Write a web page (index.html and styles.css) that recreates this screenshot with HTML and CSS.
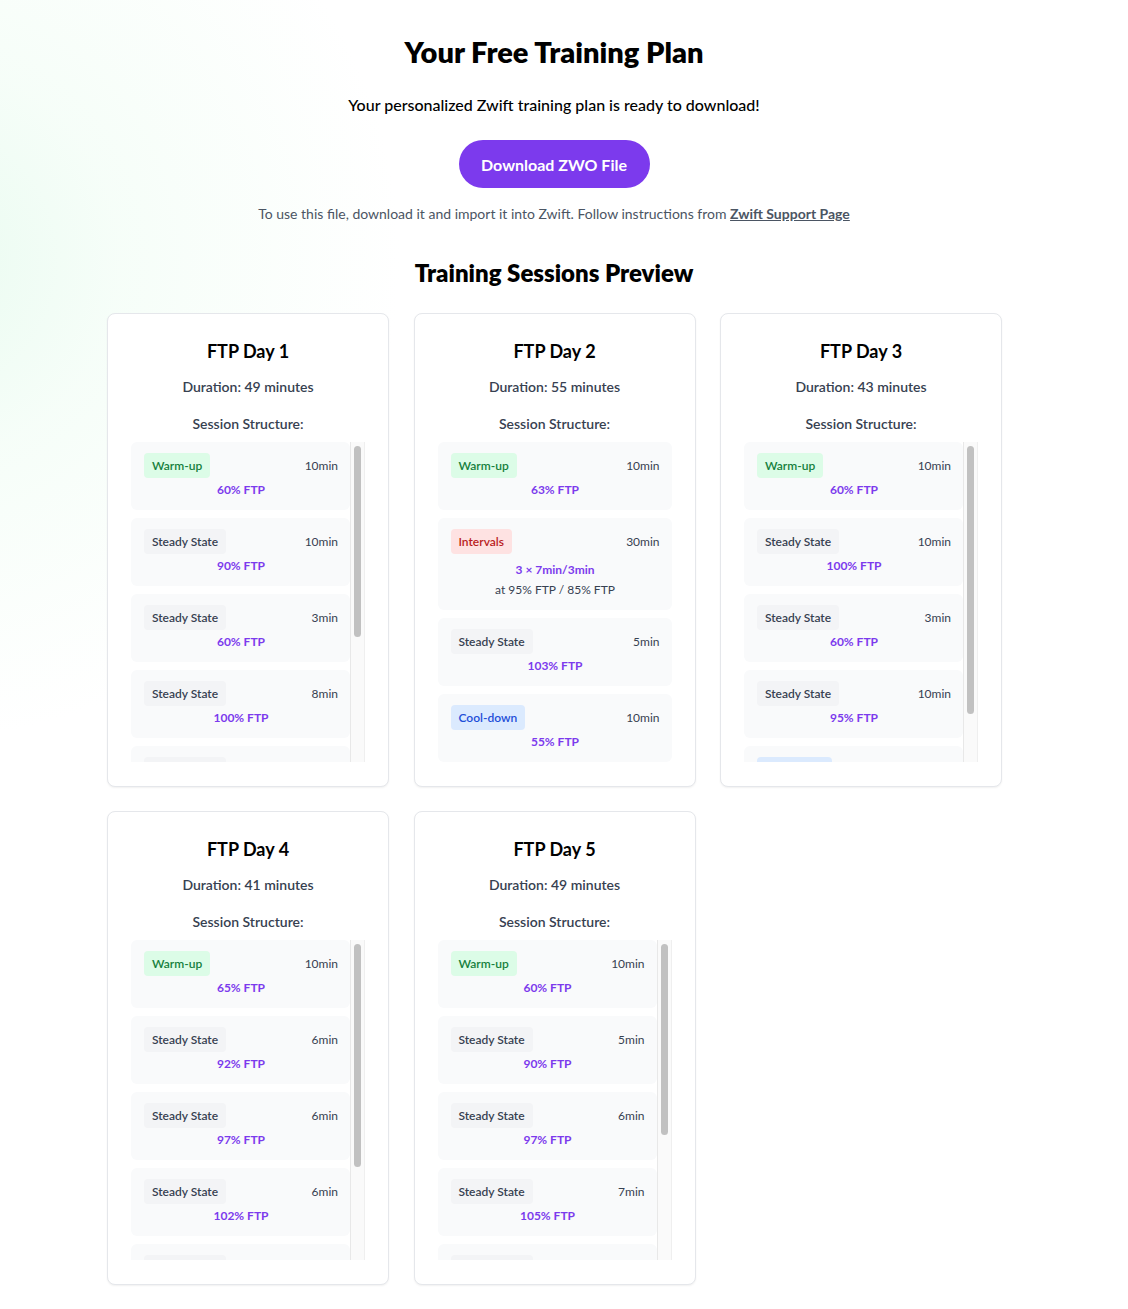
FILE: index.html
```html
<!DOCTYPE html>
<html lang="en">
<head>
    <meta charset="UTF-8">
    <meta name="viewport" content="width=device-width, initial-scale=1.0">
    <title>Your Free Training Plan</title>
    <link rel="stylesheet" href="styles.css">
</head>
<body>
    <main class="page">
        <header class="hero">
            <h1>Your Free Training Plan</h1>
            <p class="lead">Your personalized Zwift training plan is ready to download!</p>
            <button class="download-btn">Download ZWO File</button>
            <p class="note">To use this file, download it and import it into Zwift. Follow instructions from <a href="#">Zwift Support Page</a></p>
        </header>

        <h2 class="section-title">Training Sessions Preview</h2>
        <div id="sessions" class="sessions"></div>
    </main>

<script>
// Sessions shown in the preview
const sessions = [
    { name: "FTP Day 1", duration: 49, steps: [
        ["warm", 10, "60% FTP"], ["steady", 10, "90% FTP"], ["steady", 3, "60% FTP"],
        ["steady", 8, "100% FTP"], ["steady", 3, "60% FTP"], ["steady", 5, "95% FTP"], ["cool", 10, "55% FTP"]
    ]},
    { name: "FTP Day 2", duration: 55, steps: [
        ["warm", 10, "63% FTP"], ["intervals", 30, "3 × 7min/3min", "at 95% FTP / 85% FTP"],
        ["steady", 5, "103% FTP"], ["cool", 10, "55% FTP"]
    ]},
    { name: "FTP Day 3", duration: 43, steps: [
        ["warm", 10, "60% FTP"], ["steady", 10, "100% FTP"], ["steady", 3, "60% FTP"],
        ["steady", 10, "95% FTP"], ["cool", 10, "55% FTP"]
    ]},
    { name: "FTP Day 4", duration: 41, steps: [
        ["warm", 10, "65% FTP"], ["steady", 6, "92% FTP"], ["steady", 6, "97% FTP"],
        ["steady", 6, "102% FTP"], ["steady", 3, "60% FTP"], ["cool", 10, "55% FTP"]
    ]},
    { name: "FTP Day 5", duration: 49, steps: [
        ["warm", 10, "60% FTP"], ["steady", 5, "90% FTP"], ["steady", 6, "97% FTP"],
        ["steady", 7, "105% FTP"], ["steady", 5, "60% FTP"], ["steady", 6, "95% FTP"], ["cool", 10, "55% FTP"]
    ]}
];

const labels = { warm: "Warm-up", steady: "Steady State", intervals: "Intervals", cool: "Cool-down" };

function renderSessions() {
    let container = document.getElementById("sessions");
    sessions.forEach(session => {
        let card = document.createElement("div");
        card.className = "card";
        card.innerHTML = `<h3>${session.name}</h3>
            <p class="duration">Duration: ${session.duration} minutes</p>
            <p class="structure">Session Structure:</p>`;
        let scroll = document.createElement("div");
        scroll.className = "step-scroll";
        let list = document.createElement("div");
        list.className = "step-list";
        session.steps.forEach(step => {
            let item = document.createElement("div");
            item.className = "step" + (step[0] === "intervals" ? " step-intervals" : "");
            item.innerHTML = `<div class="step-head">
                    <span class="badge badge-${step[0]}">${labels[step[0]]}</span>
                    <span class="step-time">${step[1]}min</span>
                </div>
                <div class="step-power">${step[2]}</div>`;
            if (step[3]) {
                let sub = document.createElement("div");
                sub.className = "step-sub";
                sub.textContent = step[3];
                item.appendChild(sub);
            }
            list.appendChild(item);
        });
        scroll.appendChild(list);
        card.appendChild(scroll);
        container.appendChild(card);

        // Draw a scrollbar when the steps don't fit
        if (list.scrollHeight > list.clientHeight + 1) {
            let track = document.createElement("div");
            track.className = "scroll-track";
            let thumb = document.createElement("div");
            thumb.className = "scroll-thumb";
            scroll.appendChild(track);
            track.appendChild(thumb);
            let full = list.scrollHeight;
            thumb.style.height = Math.round((320 - 8) * list.clientHeight / full) + "px";
        }
    });
}

renderSessions();
</script>
</body>
</html>
```

FILE: styles.css
```css
body {
    margin: 0;
    padding: 0 20px 40px 0;
    font-family: "Lato", "Noto Sans", sans-serif;
    color: #000;
    background: radial-gradient(circle at -80px 260px, #e9fbf0 0, rgba(240, 253, 244, 0.6) 200px, rgba(255, 255, 255, 0) 480px), #fff;
    min-height: 1309px;
    box-sizing: border-box;
}
.page {
    width: 894px;
    margin: 0 auto;
}
.hero {
    text-align: center;
    padding-top: 34px;
}
h1 {
    margin: 0;
    font-size: 29px;
    line-height: 36px;
    font-weight: 800;
}
.lead {
    margin: 23px 0 0;
    font-size: 16px;
    line-height: 24px;
    font-weight: 500;
}
.download-btn {
    margin-top: 23px;
    width: 191px;
    height: 48px;
    border: none;
    border-radius: 24px;
    background: #7c3aed;
    color: white;
    font-family: inherit;
    font-size: 16px;
    font-weight: 700;
    cursor: pointer;
}
.note {
    margin: 16px 0 0;
    font-size: 14px;
    line-height: 20px;
    color: #4b5563;
}
.note a {
    color: #4b5563;
    font-weight: 700;
}
.section-title {
    margin: 33px 0 0;
    text-align: center;
    font-size: 24px;
    line-height: 32px;
    font-weight: 800;
}
.sessions {
    margin-top: 24px;
    display: grid;
    grid-template-columns: repeat(3, 282px);
    column-gap: 24.5px;
    row-gap: 24px;
}
.card {
    height: 474px;
    box-sizing: border-box;
    border: 1px solid #e5e7eb;
    border-radius: 8px;
    box-shadow: 0 1px 2px rgba(0, 0, 0, 0.06);
    background: #fff;
    padding: 25px 23px 0;
    text-align: center;
}
.card h3 {
    margin: 0;
    font-size: 18px;
    line-height: 24px;
    font-weight: 700;
}
.duration, .structure {
    margin: 0;
    font-size: 14px;
    line-height: 20px;
    font-weight: 600;
    color: #374151;
}
.duration { margin-top: 14px; }
.structure { margin-top: 17px; margin-bottom: 8px; }
.step-scroll {
    display: flex;
    height: 320px;
}
.step-list {
    flex: 1;
    overflow: hidden;
    display: flex;
    flex-direction: column;
    gap: 8px;
}
.scroll-track {
    width: 15px;
    flex-shrink: 0;
    box-sizing: border-box;
    background: #fafafa;
    border-left: 1px solid #e8e8e8;
    border-right: 1px solid #efefef;
    padding: 4px 3px;
}
.scroll-thumb {
    width: 7px;
    background: #c1c1c1;
    border-radius: 4px;
}
.step {
    flex-shrink: 0;
    background: #f9fafb;
    border-radius: 6px;
    padding: 11px 12px 12px 13px;
}
.step-head {
    display: flex;
    justify-content: space-between;
    align-items: center;
}
.badge {
    padding: 4px 8px;
    border-radius: 4px;
    font-size: 12px;
    line-height: 17px;
    font-weight: 600;
}
.badge-warm { background: #dcfce7; color: #15803d; }
.badge-steady { background: #f3f4f6; color: #374151; }
.badge-intervals { background: #fee2e2; color: #b91c1c; }
.badge-cool { background: #dbeafe; color: #1d4ed8; }
.step-time {
    font-size: 12px;
    color: #374151;
}
.step-power {
    margin-top: 3px;
    font-size: 12px;
    line-height: 17px;
    font-weight: 700;
    color: #7c3aed;
}
.step-intervals .step-power { margin-top: 7px; }
.step-sub {
    margin-top: 3px;
    font-size: 12px;
    line-height: 17px;
    color: #374151;
}
```
